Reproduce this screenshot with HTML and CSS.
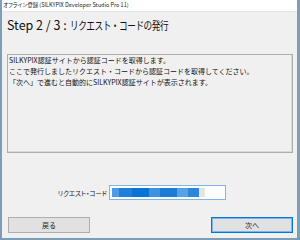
FILE: index.html
```html
<!DOCTYPE html>
<html lang="ja">

<head>
    <meta charset="UTF-8">
    <title>オフライン登録</title>
    <link rel="stylesheet" href="styles.css">
</head>

<body>
    <div class="window">
        <div class="titlebar">オフライン登録 (SILKYPIX Developer Studio Pro 11)</div>
        <div class="main">
            <h1 class="heading">Step 2 / 3 : <span class="heading-ja">リクエスト・コードの発行</span></h1>
            <div class="message">
                <p>SILKYPIX認証サイトから認証コードを取得します。</p>
                <p>ここで発行しましたリクエスト・コードから認証コードを取得してください。</p>
                <p>「次へ」で進むと自動的にSILKYPIX認証サイトが表示されます。</p>
            </div>
            <div class="code-row">
                <label class="code-label">リクエスト・コード</label>
                <div class="code-input"><span class="code-value"></span></div>
            </div>
            <div class="buttons">
                <a class="btn">戻る</a>
                <a class="btn btn-default">次へ</a>
            </div>
        </div>
    </div>
</body>

</html>
```

FILE: styles.css
```css
body {
    margin: 0;
    font-family: "Noto Sans CJK JP", "Noto Sans", sans-serif;
    color: #000;
}

.window {
    width: 300px;
    height: 240px;
    box-sizing: border-box;
    background: #f0f0f0;
    border: 2px solid #7d9db8;
    border-top: 0;
    border-right-width: 3px;
    display: flex;
    flex-direction: column;
}

.titlebar {
    height: 12px;
    background: #fff;
    font-size: 5.5px;
    line-height: 11px;
    padding-left: 1px;
    color: #222;
    border-bottom: 1px solid #e6e6e6;
    box-sizing: border-box;
    font-feature-settings: "palt";
}

.main {
    flex: 1;
    padding: 5px 4px 0 5px;
    display: flex;
    flex-direction: column;
}

.heading {
    margin: 0;
    font-size: 12.5px;
    font-weight: normal;
    line-height: 16px;
    color: #111;
    white-space: nowrap;
}

.heading-ja {
    display: inline-block;
    font-size: 11.5px;
    letter-spacing: -0.6px;
    transform: scaleX(0.75);
    transform-origin: left center;
}

.message {
    margin-top: 21px;
    height: 99px;
    box-sizing: border-box;
    border: 1px solid #adadad;
    box-shadow: inset -1px -1px 0 #d9d9d9;
    padding: 0 0 0 1px;
    font-size: 7px;
    line-height: 11px;
    color: #111;
}

.message p {
    margin: 0;
}

.code-row {
    margin-top: 32px;
    display: flex;
    align-items: center;
}

.code-label {
    width: 100px;
    text-align: right;
    padding-right: 2px;
    font-size: 6.5px;
    color: #222;
    font-feature-settings: "palt";
}

.code-input {
    width: 117px;
    height: 15px;
    box-sizing: border-box;
    border: 1px solid #7eb4ea;
    background: #fff;
    padding: 2px 2px;
}

.code-value {
    display: block;
    width: 93px;
    height: 9px;
    background: linear-gradient(90deg, #4d9be6 0 8%, #1f7fd9 8% 22%, #0a74d6 22% 40%, #3d92e2 40% 52%, #1c7cd8 52% 70%, #5aa2e6 70% 82%, #2b86dc 82% 94%, #e6e3e0 94% 100%);
}

.buttons {
    margin-top: 17px;
    display: flex;
    justify-content: space-between;
    padding-left: 1px;
}

.btn {
    width: 82px;
    height: 16px;
    box-sizing: border-box;
    background: #e1e1e1;
    border: 1px solid #adadad;
    font-size: 7px;
    line-height: 14px;
    text-align: center;
    color: #222;
}

.btn-default {
    border: 1px solid #0078d7;
    box-shadow: inset 0 0 0 1px #7ab6ea;
}
```
